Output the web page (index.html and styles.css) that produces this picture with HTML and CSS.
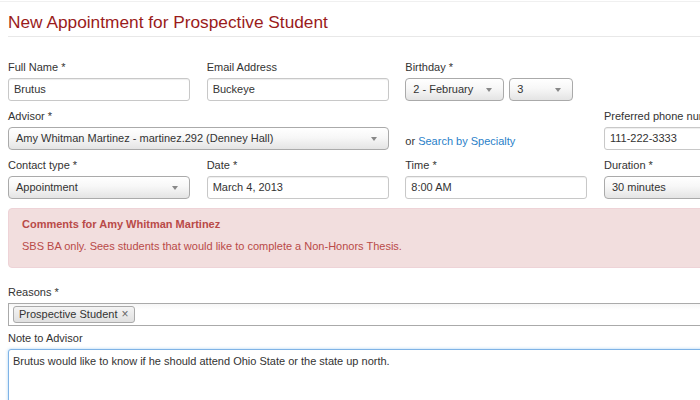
FILE: index.html
```html
<!DOCTYPE html>
<html>
<head>
<meta charset="utf-8">
<link rel="stylesheet" href="styles.css">
</head>
<body>
<div class="page">
  <header class="head"><h1>New Appointment for Prospective Student</h1></header>
  <form class="form">
    <div class="grid">
      <div class="field">
        <label>Full Name *</label>
        <div class="input">Brutus</div>
      </div>
      <div class="field">
        <label>Email Address</label>
        <div class="input">Buckeye</div>
      </div>
      <div class="field span2">
        <label>Birthday *</label>
        <div class="pair">
          <div class="select month">2 - February<span class="caret"></span></div>
          <div class="select day">3<span class="caret"></span></div>
        </div>
      </div>

      <div class="field span2">
        <label>Advisor *</label>
        <div class="select">Amy Whitman Martinez - martinez.292 (Denney Hall)<span class="caret"></span></div>
      </div>
      <div class="field">
        <label>&nbsp;</label>
        <div class="or">or <a href="#">Search by Specialty</a></div>
      </div>
      <div class="field">
        <label>Preferred phone number</label>
        <div class="input">111-222-3333</div>
      </div>

      <div class="field">
        <label>Contact type *</label>
        <div class="select">Appointment<span class="caret"></span></div>
      </div>
      <div class="field">
        <label>Date *</label>
        <div class="input">March 4, 2013</div>
      </div>
      <div class="field">
        <label>Time *</label>
        <div class="input">8:00 AM</div>
      </div>
      <div class="field">
        <label>Duration *</label>
        <div class="select">30 minutes<span class="caret"></span></div>
      </div>
    </div>

    <div class="alert">
      <div class="alert-title">Comments for Amy Whitman Martinez</div>
      <div class="alert-body">SBS BA only. Sees students that would like to complete a Non-Honors Thesis.</div>
    </div>

    <div class="field wide">
      <label>Reasons *</label>
      <div class="tags"><span class="tag">Prospective Student <span class="x">×</span></span></div>
    </div>
    <div class="field wide note">
      <label>Note to Advisor</label>
      <div class="textarea">Brutus would like to know if he should attend Ohio State or the state up north.</div>
    </div>
  </form>
</div>
</body>
</html>
```

FILE: styles.css
```css
html, body {
  margin: 0;
  padding: 0;
  background: #fff;
  overflow: hidden;
}
body {
  font-family: "Liberation Sans", Arial, sans-serif;
  font-size: 11px;
  color: #333;
  border-top: 1px solid #f0f0f0;
  margin-top: 1px;
}
.page {
  width: 820px;
  padding-left: 8px;
}
.head {
  padding-top: 10px;
  padding-bottom: 4px;
  border-bottom: 1px solid #e8e8e8;
}
.head h1 {
  margin: 0;
  font-weight: normal;
  font-size: 17.3px;
  line-height: 20px;
  color: #9a1b1b;
}
.form {
  padding-top: 23px;
}
.grid {
  display: grid;
  grid-template-columns: repeat(4, 182px);
  column-gap: 16.67px;
  row-gap: 8px;
}
.span2 { grid-column: span 2; }
.field label {
  display: block;
  line-height: 14px;
  margin-bottom: 4px;
  color: #333;
  white-space: nowrap;
}
.input, .select, .textarea {
  box-sizing: border-box;
  height: 23px;
  line-height: 21px;
  border: 1px solid #c8c8c8;
  border-radius: 3px;
  background: #fff;
  box-shadow: inset 0 1px 1px rgba(0,0,0,0.07);
  padding: 0 5px;
  color: #333;
  white-space: nowrap;
  overflow: hidden;
}
.select {
  position: relative;
  border-color: #aaa;
  border-radius: 4px;
  background: linear-gradient(#ffffff 0%, #f7f7f7 45%, #e4e4e4 100%);
  box-shadow: 0 1px 0 rgba(255,255,255,0.6);
  padding-left: 7px;
}
.caret {
  position: absolute;
  right: 11px;
  top: 9px;
  width: 0;
  height: 0;
  border-left: 3.5px solid transparent;
  border-right: 3.5px solid transparent;
  border-top: 4px solid #888;
}
.pair {
  display: flex;
  gap: 5px;
}
.month { width: 99px; }
.day { width: 64px; }
.or {
  padding-top: 4px;
  line-height: 21px;
  height: 19px;
  color: #333;
}
.or a {
  color: #2a7fc9;
  text-decoration: none;
}
.alert {
  margin-top: 9px;
  width: 760px;
  box-sizing: border-box;
  background: #f2dede;
  border: 1px solid #eed3d7;
  border-radius: 4px;
  padding: 7px 13px 13px;
  color: #b94a48;
}
.alert-title {
  font-weight: bold;
  line-height: 16px;
  margin-bottom: 6px;
}
.alert-body {
  line-height: 16px;
}
.wide { width: 760px; }
.field.wide { margin-top: 17px; }
.field.note { margin-top: 5px; }
.tags {
  box-sizing: border-box;
  height: 23px;
  border: 1px solid #aaa;
  background: linear-gradient(#f6f6f6, #fff 30%);
  padding: 2px 4px;
}
.tag {
  display: inline-block;
  box-sizing: border-box;
  height: 17px;
  line-height: 15px;
  padding: 0 5px 0 5px;
  border: 1px solid #aaa;
  border-radius: 3px;
  background: linear-gradient(#f4f4f4, #e0e0e0);
  color: #333;
}
.tag .x {
  color: #666;
  font-size: 12px;
  margin-left: 1px;
}
.textarea {
  height: 80px;
  border-color: #7fb3e6;
  box-shadow: 0 0 3px rgba(82,168,236,0.5);
  line-height: 14px;
  padding: 4px 4px;
  white-space: normal;
}
```
